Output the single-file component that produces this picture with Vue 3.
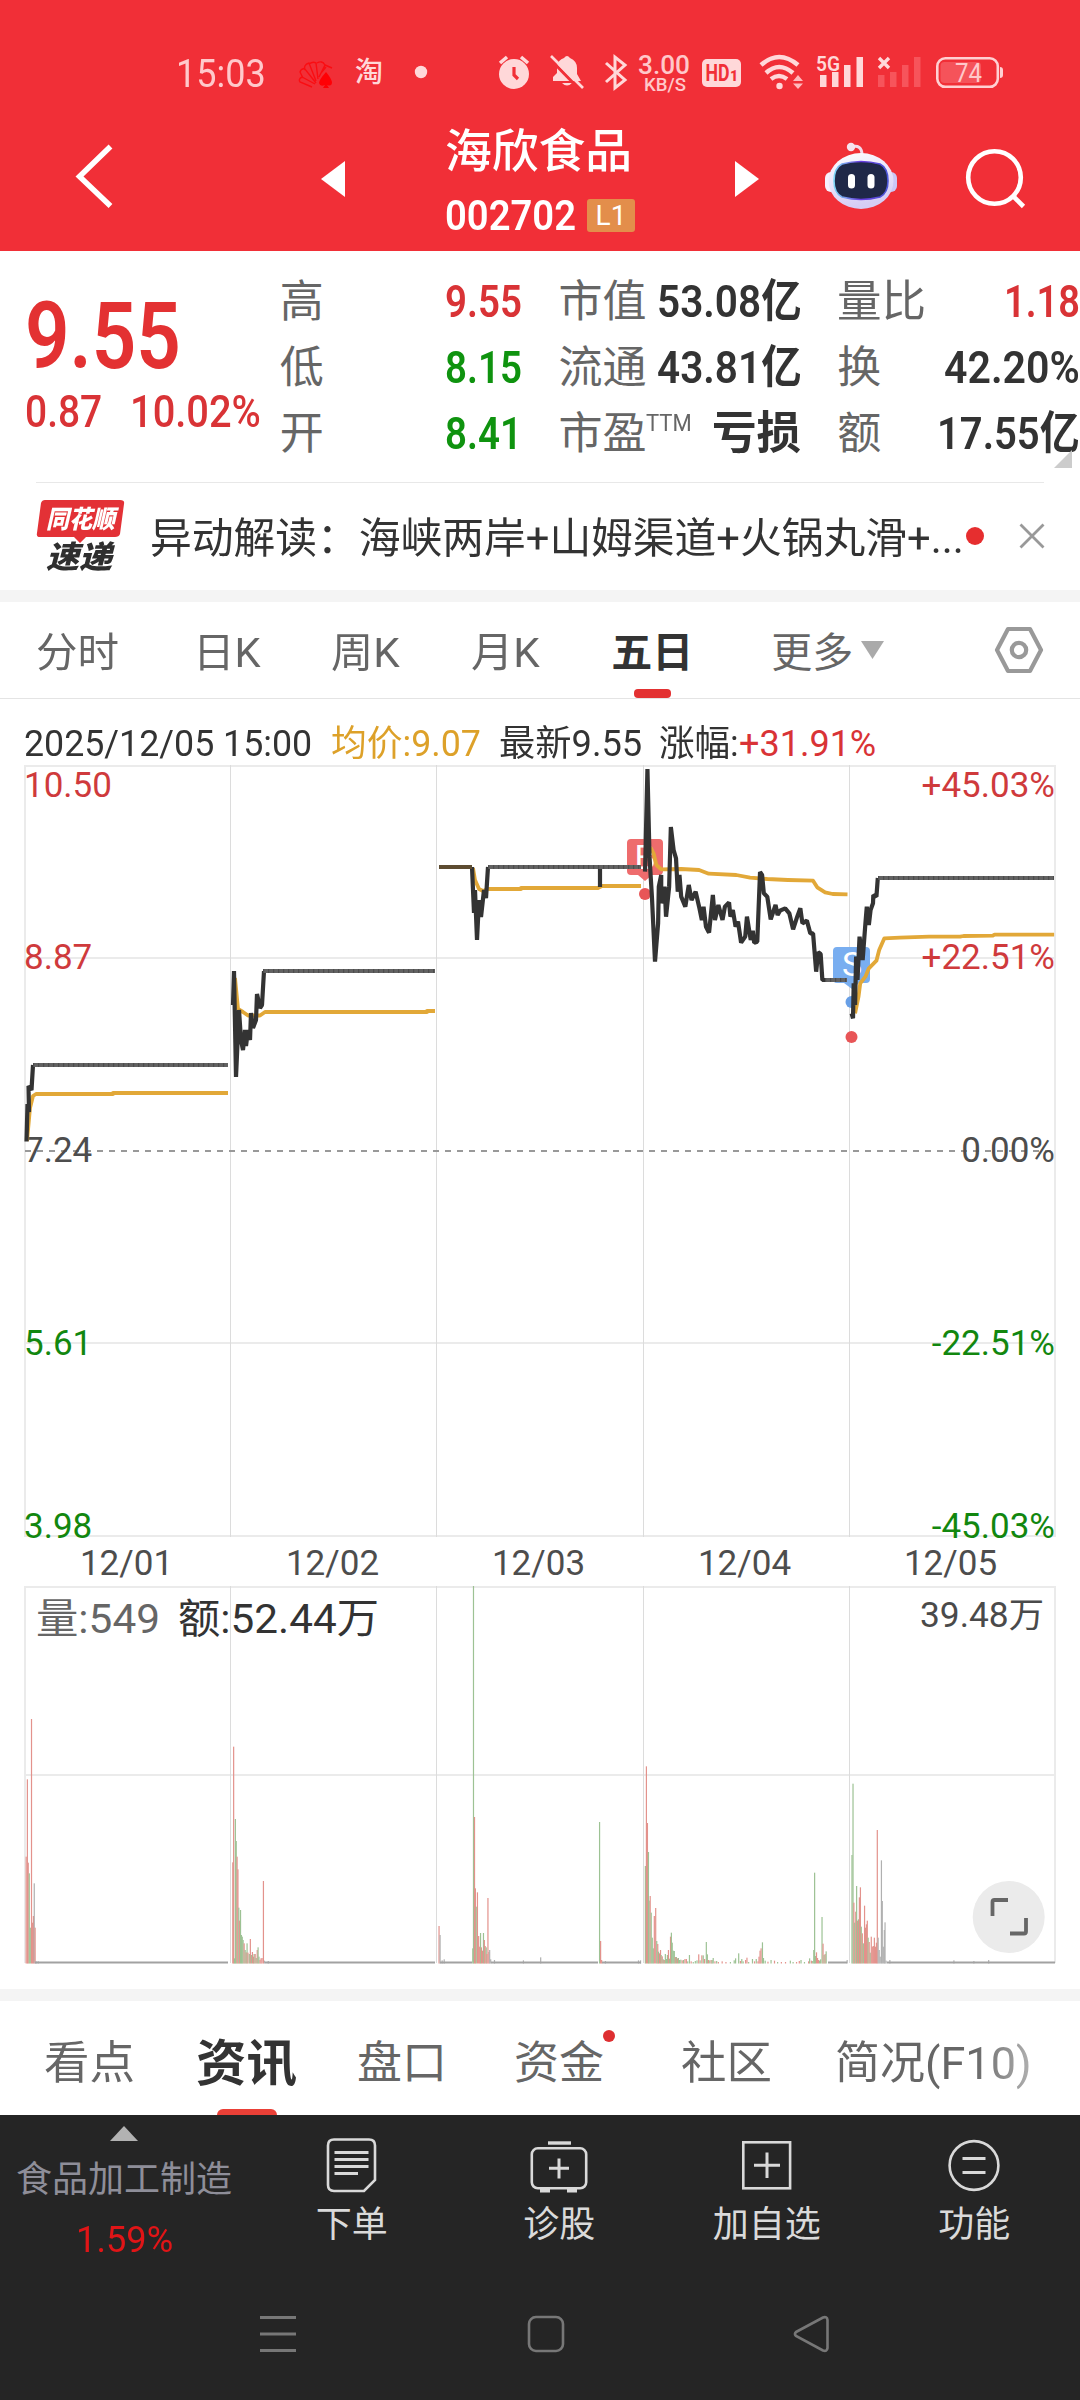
<script setup>
// v-fit sets an exact advance width on a run of text by condensing its glyphs
const vFit = {
  mounted(el, { value }) {
    const natural = el.offsetWidth
    el.style.transform = `scaleX(${value / natural})`
    el.style.marginRight = `${value - natural}px`
  }
}

const quoteColumns = [
  [
    { label: '高', lw: 44, value: '9.55', vw: 77, tone: 'up' },
    { label: '低', lw: 44, value: '8.15', vw: 77, tone: 'down' },
    { label: '开', lw: 44, value: '8.41', vw: 77, tone: 'down' }
  ],
  [
    { label: '市值', lw: 88, value: '53.08亿', vw: 145, tone: 'plain' },
    { label: '流通', lw: 88, value: '43.81亿', vw: 145, tone: 'plain' },
    { label: '市盈', lw: 88, sup: 'TTM', value: '亏损', vw: 89, tone: 'plain' }
  ],
  [
    { label: '量比', lw: 89, value: '1.18', vw: 76, tone: 'up' },
    { label: '换', lw: 44, value: '42.20%', vw: 136, tone: 'plain' },
    { label: '额', lw: 44, value: '17.55亿', vw: 143, tone: 'plain' }
  ]
]

const periods = [
  { name: '分时', left: 36, w: 83 },
  { name: '日K', left: 74, w: 68 },
  { name: '周K', left: 70, w: 69 },
  { name: '月K', left: 72, w: 69 },
  { name: '五日', left: 71, w: 82 },
  { name: '更多', left: 78, w: 82 }
]
periods[4].active = true

const priceLabels = [
  { y: 771, left: '10.50', right: '+45.03%', tone: 'up' },
  { y: 943, left: '8.87', right: '+22.51%', tone: 'up' },
  { y: 1136, left: '7.24', right: '0.00%', tone: 'mid' },
  { y: 1329, left: '5.61', right: '-22.51%', tone: 'down' },
  { y: 1512, left: '3.98', right: '-45.03%', tone: 'down' }
]

const dates = ['12/01', '12/02', '12/03', '12/04', '12/05']
const dayLines = [230.5, 436.5, 643.5, 849.5]

const day4 = '305,365 312,57 318,320 325,440 334,635 343,520 345,410 352,375 352,460 362,410 366,500 375,410 380,231 388,300 395,325 400,425 405,375 410,440 422,470 432,405 440,450 452,425 462,470 470,510 475,470 482,530 491,548 502,435 508,510 518,465 530,510 537,470 549,457 553,500 560,480 568,530 575,515 584,578 596,560 601,500 612,570 618,542 622,578 631,575 639,366 645,375 650,430 660,440 670,508 684,465 690,495 697,482 712,475 724,490 735,538 747,500 756,475 762,520 775,512 785,550 793,550 802,665 808,607 815,612 820,690 830,690'
const day4Avg = '320,292 330,310 338,345 352,358 410,357 462,360 490,371 570,375 610,383 660,387 720,390 793,392 805,412 828,427 850,432 893,433'
const day5 = '905,790 909,805 911,700 915,765 918,620 922,690 928,560 937,630 945,520 949,470 955,525 960,480 967,460 968,435 977,440 981,384'
const day5Avg = '915,790 925,740 930,700 945,680 955,655 977,632 985,600 1000,565 1045,563 1130,560 1220,560 1230,558 1315,557 1320,554 1493,554'

// Volume bars as x, top, tone on a fine grid: r rise, g fall, k flat
const earlyBars = `76 1070 r,79.5 838 r,82 1088 r,85 1120 g,88 1283 g,91.5 657 r,94 1268 r,97 1248 r,99.5 1150 k,102 1283 r,105 1384 k,111 1384 k,
676 1087 r,678.5 740 r,681 1375 g,683.5 957 g,686 1023 g,688.5 1070 r,691 1108 r,693.5 1223 g,696 1262 r,698.5 1230 g,701 1305 g,703.5 1310 g,706 1320 g,709 1330 r,712 1350 g,715 1357 r,717.5 1330 g,720 1358 r,724 1362 g,727 1317 r,730 1365 g,733 1356 r,736 1370 r,738 1362 g,741 1362 r,744 1374 g,747 1350 r,749.5 1342 g,752 1370 g,755 1380 r,758 1375 r,761 1374 r,765 1143 r,768 1382 k,779 1383 k,
1275 1278 r,1278 1305 k,1284 1381 k,1290 1378 k,1373 1345 g,1375 258 g,1378 951 r,1380.5 1165 r,1383 1220 g,1386.5 1177 r,1390 1308 r,1393 1340 r,1395.5 1299 g,1398 1342 r,1401 1352 r,1404 1299 g,1406.5 1320 r,1409 1338 r,1412 1342 g,1414 1362 r,1417 1194 r,1420 1356 r,1422 1350 k,1425 1378 k,1436 1380 k,1520 1381 k`
const lateBars = `2 1372 k,173 966 g,176 1323 r,179 1380 r,190 1383 k,286 1381 k,292 1381 k,
306 1098 g,309 799 r,312 969 r,315 1056 g,317 1202 g,320 1188 r,323 1238 g,326 1313 g,329 1345 g,332 1248 r,336 1224 r,339 1323 g,342 1332 r,344 1355 g,347 1360 r,350 1350 r,352 1365 g,355 1369 r,358 1378 g,361 1380 r,364 1362 g,367 1377 g,370 1365 g,373 1350 r,376 1376 g,379 1310 r,381.5 1298 g,384 1328 g,387 1352 g,390 1353 g,393 1371 r,396 1371 g,399 1375 r,402 1374 g,405 1380 g,409 1379 g,413 1381 r,417 1380 g,421 1377 r,425 1377 r,429 1384 g,434 1365 g,439 1384 r,445 1386 g,451 1383 g,456 1381 g,461 1363 r,465 1381 g,470 1366 r,474 1366 g,478 1377 r,483 1326 g,486 1363 g,489 1380 r,493 1381 g,497 1380 r,500 1380 g,503 1374 g,508 1384 r,513 1383 g,518 1386 r,529 1384 r,540 1386 r,553 1386 g,564 1381 g,568 1375 g,577 1360 g,582 1383 r,586 1377 g,590 1384 g,597 1380 r,601 1373 r,606 1386 g,617 1377 g,623 1384 r,628 1377 g,633 1384 r,636 1370 r,639 1352 r,642 1345 r,646 1327 g,649 1374 g,654 1382 g,662 1385 r,671 1380 g,681 1382 r,690 1386 g,701 1386 r,713 1386 r,727 1382 g,735 1386 g,745 1386 r,753 1383 r,758 1380 g,768 1386 g,780 1384 r,783 1375 g,788 1382 r,792 1383 g,795 1350 g,797.5 1118 g,800 1368 g,803 1357 r,806 1374 r,809 1380 r,812 1382 g,815 1378 g,819 1251 g,822 1331 r,825 1365 g,828 1362 r,831 1354 g,892 1380 k,
906 1065 g,909 851 g,911.5 1208 r,914 1268 g,917 1235 r,919.5 1158 g,922 1262 r,925 1258 g,927.5 1192 r,930.5 1162 r,933 1280 g,936 1300 r,939 1330 g,942.5 1217 r,945 1283 r,948 1273 r,950.5 1262 r,953 1313 g,956 1326 r,959 1358 g,962 1310 r,965 1340 r,968 1338 r,971 1313 r,974 1340 r,977 1328 r,979.5 990 r,982 1313 k,985 1350 k,988 1370 k,991.5 1081 k,994 1203 k,997 1340 k,1000 1290 k,1002 1267 k,1005 1382 k,1016 1380 k,1202 1381 k,1260 1383 k,1303 1380 k`
const toBars = (raw, offset) =>
  raw.split(',').map((row) => {
    const [x, y, tone] = row.trim().split(' ')
    const top = 1500 + y / 3
    return { x: offset + x / 2.904 - 0.6, y: top, h: 1963.5 - top, tone }
  })
const bars = [...toBars(earlyBars, 0), ...toBars(lateBars, 540)]

const sections = [
  { name: '看点', left: 44, w: 91 },
  { name: '资讯', left: 61, w: 101, active: true },
  { name: '盘口', left: 60, w: 90 },
  { name: '资金', left: 67, w: 90, dot: true },
  { name: '社区', left: 77, w: 91 },
  { name: '简况(F10)', left: 63, w: 197, fade: true }
]
</script>

<template>
  <div class="page">
    <header class="top">
      <div class="status">
        <span v-fit="90" class="clock">15:03</span>
        <svg class="status-icons" width="730" height="44" viewBox="290 50 730 44">
          <g fill="none" stroke="#fa0d12" stroke-width="1.400">
            <path d="M312 87L300 82Q298 79 302 77L315 84M303 78L300 72Q301 68 305 69L316 83M305 70Q303 65 309 63L316 81M309 64Q313 61 316 63L318 79M317 63Q322 60 325 65L319 77M325 65L332 68M326 67L321 73" />
          </g>
          <path d="M326 72Q319 80 319 83Q320 87 325 85L323 88H329L327 85Q332 87 332 82Q331 78 326 72Z" fill="#ff0005" />
          <text x="355" y="82" class="tao">淘</text>
          <circle cx="421" cy="72" r="6.2" fill="#ffd8d9" />
          <circle cx="514" cy="74" r="15" fill="#ffd8d9" />
          <path d="M500 63L507 57M528 63L521 57" stroke="#ffd8d9" stroke-width="3.5" />
          <path d="M514 67V75L518 79" fill="none" stroke="#f12f37" stroke-width="3.2" />
          <path d="M564 58Q567 54 570 58Q577 61 577 68V74L581 81H553V77L557 73V66Q558 60 564 58ZM562 83H572Q567 88 562 83Z" fill="#ffd8d9" />
          <path d="M549 58L581 91" stroke="#f12f37" stroke-width="3" />
          <path d="M551 56L583 88" stroke="#ffd8d9" stroke-width="2.6" />
          <path d="M606 63L625 80L615 88V57L625 65L606 82" fill="none" stroke="#ffd8d9" stroke-width="3" />
          <g fill="#ffc8ca" font-weight="500">
            <text x="638" y="74" font-size="26" textLength="52" lengthAdjust="spacingAndGlyphs">3.00</text>
            <text x="644" y="90.500" font-size="19" textLength="42" lengthAdjust="spacingAndGlyphs">KB/S</text>
          </g>
          <rect x="702" y="59" width="39" height="28" rx="5" fill="#ffd8d9" />
          <text x="705.500" y="81" font-size="23" font-weight="700" fill="#f12f37" textLength="24" lengthAdjust="spacingAndGlyphs">HD</text>
          <text x="730" y="81" font-size="14" font-weight="900" fill="#f12f37">1</text>
          <g fill="none" stroke="#ffd8d9" stroke-width="4.500">
            <path d="M761 65Q779 49 798 65M766 73Q779 61 793 73M771 79Q779 73 787 79" />
          </g>
          <circle cx="779.500" cy="86" r="3.200" fill="#ffd8d9" />
          <path d="M793 81L798 75L803 81ZM793 83.500L798 89L803 83.500Z" fill="#ffb9bc" />
          <text x="816" y="70.500" font-size="21" font-weight="600" fill="#ffd8d9" textLength="24" lengthAdjust="spacingAndGlyphs">5G</text>
          <path d="M820 75H826.500V87H820ZM832 72H838.500V87H832ZM844 65H850.500V87H844ZM856.500 57H863V87H856.500Z" fill="#ffd8d9" />
          <path d="M879 58L889 68M889 58L879 68" stroke="#ffd8d9" stroke-width="3.400" />
          <path d="M878 75H884.500V87H878ZM890 72H896.500V87H890ZM902 65H908.500V87H902ZM914 57H920.500V87H914Z" fill="#f7545b" />
          <rect x="937.300" y="58.300" width="60.500" height="28.500" rx="8" fill="none" stroke="#ffd0d2" stroke-width="2.600" />
          <path d="M1000 67Q1003 67 1003 70V75Q1003 78 1000 78Z" fill="#ffd0d2" />
          <rect x="940.500" y="62" width="40.500" height="21" rx="4" fill="#f5535a" />
          <text x="955" y="82" font-size="25" fill="#ffc8ca" textLength="27" lengthAdjust="spacingAndGlyphs">74</text>
        </svg>
      </div>
      <div class="nav">
        <svg class="back" width="40" height="68" viewBox="75 143 40 68"><path d="M110.500 146.500L79.500 176.500L110.500 206" fill="none" stroke="#fff" stroke-width="5.500" /></svg>
        <svg class="prev" width="24" height="36" viewBox="0 0 24 36"><path d="M0 18L24 0V36Z" fill="#fff" /></svg>
        <div class="title">
          <div v-fit="187" class="name">海欣食品</div>
          <div class="code-row">
            <span v-fit="131" class="code">002702</span>
            <span class="level">L1</span>
          </div>
        </div>
        <svg class="next" width="24" height="36" viewBox="0 0 24 36"><path d="M24 18L0 0V36Z" fill="#fff" /></svg>
        <svg class="robot" width="74" height="68" viewBox="824 142 74 68">
          <defs>
            <linearGradient id="shell" x1="0" y1="0" x2="0.300" y2="1"><stop offset="0" stop-color="#fff" /><stop offset=".55" stop-color="#e9e3fa" /><stop offset="1" stop-color="#d5cdf4" /></linearGradient>
            <linearGradient id="rim" x1="0" y1="0" x2="1" y2="0"><stop offset="0" stop-color="#7cd6f5" /><stop offset=".5" stop-color="#6a3be0" /><stop offset="1" stop-color="#4a57d8" /></linearGradient>
          </defs>
          <path d="M851 147Q862 144 862 155" fill="none" stroke="#f3dbea" stroke-width="3" />
          <circle cx="851" cy="147" r="4.200" fill="#f6e3ee" />
          <rect x="825" y="172" width="14" height="20" rx="6" fill="#f6f1fd" />
          <rect x="883" y="172" width="14" height="20" rx="6" fill="#cbc6f5" />
          <ellipse cx="861" cy="181" rx="32.500" ry="28" fill="url(#shell)" />
          <path d="M842 164Q861 159 880 164Q888 168 888 181Q888 193 880 197Q861 202 842 197Q834 193 834 181Q834 168 842 164Z" fill="#1f2848" stroke="url(#rim)" stroke-width="1.600" />
          <rect x="848" y="174" width="7" height="14.500" rx="3.500" fill="#fff" />
          <rect x="867.500" y="174" width="7" height="14.500" rx="3.500" fill="#fff" />
        </svg>
        <svg class="search" width="62" height="62" viewBox="964 147 62 62"><circle cx="994.500" cy="177.500" r="26.300" fill="none" stroke="#fff" stroke-width="4.600" /><path d="M1013 196L1023.500 206.500" stroke="#fff" stroke-width="4.600" /></svg>
      </div>
    </header>

    <section class="quote">
      <div class="price-block up">
        <div v-fit="156" class="price">9.55</div>
        <div class="change"><span v-fit="77">0.87</span><span v-fit="131">10.02%</span></div>
      </div>
      <div v-for="(col, i) in quoteColumns" :key="i" class="stat-col">
        <div v-for="row in col" :key="row.label" class="stat">
          <span v-fit="row.lw" class="stat-label">{{ row.label }}</span>
          <span v-if="row.sup" v-fit="46" class="sup">{{ row.sup }}</span>
          <span v-fit="row.vw" class="stat-value" :class="row.tone">{{ row.value }}</span>
        </div>
      </div>
      <i class="corner"></i>
    </section>

    <section class="news">
      <div class="badge">
        <svg class="tag" width="90" height="44" viewBox="0 0 90 44"><path d="M9 1H84Q89 1 88 5L84 35Q83 38 79 38H50L44 44L38 38H4Q0 38 1 34L5 4Q6 1 9 1Z" fill="#e33136" /></svg>
        <span v-fit="69" class="tag-text">同花顺</span>
        <span v-fit="66" class="express">速递</span>
      </div>
      <span v-fit="814" class="headline">异动解读：海峡两岸+山姆渠道+火锅丸滑+...</span>
      <i class="unread"></i>
      <svg class="close" width="28" height="28" viewBox="0 0 28 28"><path d="M2.500 2.500L25.500 25.500M25.500 2.500L2.500 25.500" stroke="#999" stroke-width="2.800" /></svg>
    </section>

    <nav class="periods">
      <div v-for="p in periods" :key="p.name" class="period" :class="{ active: p.active }" :style="{ marginLeft: p.left + 'px' }">
        <span v-fit="p.w">{{ p.name }}</span>
      </div>
      <svg class="caret" width="23" height="18" viewBox="0 0 23 18"><path d="M0 0H23L11.500 18Z" fill="#aaa" /></svg>
      <svg class="gear" width="50" height="48" viewBox="0 0 50 48"><path d="M14 3H36L47 24L36 45H14L3 24Z" fill="none" stroke="#999" stroke-width="4.200" stroke-linejoin="round" /><circle cx="25" cy="24" r="7.200" fill="none" stroke="#999" stroke-width="4.200" /></svg>
    </nav>

    <div class="summary">
      <span v-fit="288">2025/12/05 15:00</span>
      <span v-fit="150" class="avg">均价:9.07</span>
      <span v-fit="143" class="latest">最新9.55</span>
      <span v-fit="80" class="range">涨幅:</span>
      <span v-fit="137" class="up">+31.91%</span>
    </div>

    <svg class="chart" width="1080" height="1224" viewBox="0 765 1080 1224">
      <g fill="none" stroke="#ebebeb" stroke-width="2">
        <path d="M24 766H1056M24 958H1056M24 1343H1056M24 1536H1056M25 765V1537M1055 765V1537" />
        <path d="M24 1587H1056M24 1775H1056M25 1586V1963M1055 1586V1963" />
      </g>
      <path v-for="x in dayLines" :key="x" :d="`M${x} 765V1537M${x} 1586V1963`" stroke="#dcdcdc" stroke-width="1" />
      <path d="M25 1151H1055" stroke="#999" stroke-width="2" stroke-dasharray="6 6" />

      <g v-for="l in priceLabels" :key="l.y" :class="l.tone" class="axis">
        <text x="24" :y="l.y + 26">{{ l.left }}</text>
        <text x="1055" :y="l.y + 26" text-anchor="end">{{ l.right }}</text>
      </g>
      <text v-for="(d, i) in dates" :key="d" class="axis mid" :x="126.500 + i * 206" y="1575" text-anchor="middle">{{ d }}</text>

      <path d="M631 839H659Q663 839 663 843V871Q663 875 659 875H652L645 881L638 875H631Q627 875 627 871V843Q627 839 631 839Z" fill="#ee6c6d" />
      <text x="645" y="869" class="mark" text-anchor="middle">B</text>
      <circle cx="645" cy="894" r="6" fill="#e85557" />
      <path d="M837 947H866Q870 947 870 951V979Q870 983 866 983H859L852 989L844 983H837Q833 983 833 979V951Q833 947 837 947Z" fill="#79aef0" />
      <text x="852" y="976" class="mark" text-anchor="middle">S</text>
      <circle cx="851.500" cy="1002" r="6" fill="#689fe6" />
      <circle cx="851.500" cy="1037" r="6" fill="#e85557" />

      <g fill="none" stroke="#e2a838" stroke-width="3.800" stroke-linejoin="round">
        <path d="M27 1141L30 1108L33 1096L36 1094H113V1093H228" />
        <path d="M235 978L238 1009L243 1012L248 1015.500L260 1015.500L265 1012H427V1011H435" />
        <path d="M473 868L475 880L479 889L483 891L488 889H521V888H598L602 886H641" />
        <g transform="translate(540 750) scale(.34435 .33333)">
          <polyline :points="day4Avg" class="steady" />
          <polyline :points="day5Avg" class="steady" />
        </g>
      </g>
      <g fill="none" stroke="#333" stroke-width="4.200" stroke-linejoin="bevel">
        <path d="M26.500 1141.500L27.500 1104L29 1112L28.500 1086L31.500 1090L33 1065" />
        <path d="M233 1005L234 971L236 1077L239 1010L241 1040L243 1050L245 1030L246 1046L248 1030L250 1040L251 1013L253 1028L256 1020L257 994L260 1008L262 1005L264 971" />
        <path d="M472 867L474 913L475 890L477 940L479 900L481 917L484 890L486 898L488 867M600 867V887" />
        <g transform="translate(540 750) scale(.34435 .33333)">
          <polyline :points="day4" class="steady" />
          <polyline :points="day5" class="steady" />
        </g>
      </g>
      <path d="M33 1065H228M263 971H435M488 867H641M825 980H847M878 878H1054" stroke="#626262" stroke-width="4" />
      <path d="M33 1065H228M263 971H435M488 867H641M825 980H847M878 878H1054" stroke="#4d4d4d" stroke-width="4" stroke-dasharray="1.200 3.800" />
      <path d="M439 867H472" stroke="#5d4c31" stroke-width="4" />

      <rect v-for="(b, i) in bars" :key="i" :x="b.x" :y="b.y" :height="b.h" width="1.200" :class="'vol-' + b.tone" />
      <path d="M35 1962.500H228M265 1962.500H435M440 1962.500H472M491 1962.500H598M602 1962.500H641M828 1962.500H847M887 1962.500H1055" stroke="#a2a2a2" stroke-width="2" />

      <text x="36" y="1633" font-size="41" fill="#666" textLength="124" lengthAdjust="spacingAndGlyphs">量:549</text>
      <text x="178" y="1633" font-size="41" fill="#333" textLength="201" lengthAdjust="spacingAndGlyphs">额:52.44万</text>
      <text x="920" y="1627" font-size="34.500" fill="#4a4a4a" textLength="124" lengthAdjust="spacingAndGlyphs">39.48万</text>
      <circle cx="1008.700" cy="1917" r="36" fill="#ebebeb" />
      <path d="M992.500 1916V1902Q992.500 1900 994.500 1900H1008M1010 1933.500H1024Q1026 1933.500 1026 1931.500V1918" fill="none" stroke="#666" stroke-width="3.800" />
    </svg>

    <nav class="sections">
      <div v-for="s in sections" :key="s.name" class="section" :class="{ active: s.active, fade: s.fade }" :style="{ marginLeft: s.left + 'px' }">
        <span v-fit="s.w">{{ s.name }}</span>
        <i v-if="s.dot" class="dot"></i>
      </div>
    </nav>

    <footer class="bottom">
      <div class="actions">
        <div class="industry">
          <svg width="28" height="15" viewBox="0 0 28 15"><path d="M14 0L28 15H0Z" fill="#b2b2b2" /></svg>
          <div class="industry-name">食品加工制造</div>
          <div v-fit="97" class="industry-rate">1.59%</div>
        </div>
        <div class="action">
          <svg width="60" height="56" viewBox="0 0 60 56" fill="none" stroke="#d9d9d9" stroke-width="2.600"><path d="M12 2.500H47Q53 2.500 53 8.500V43L42 54H12Q6 54 6 48V8.500Q6 2.500 12 2.500Z" /><path d="M12.500 15.500H46.500M12.500 22.500H46.500M12.500 29.500H46.500M12.500 36.500H36" stroke-width="3" /></svg>
          <span>下单</span>
        </div>
        <div class="action">
          <svg width="60" height="56" viewBox="0 0 60 56" fill="none" stroke="#d9d9d9" stroke-width="2.600"><path d="M19 6H42" stroke-width="3.400" /><rect x="2.800" y="11.300" width="54.400" height="40" rx="6" /><path d="M20 31.300H40M30 21.500V41.500" stroke-width="3" /><path d="M11 53.500H21M38 53.500H48" stroke-width="4" /></svg>
          <span>诊股</span>
        </div>
        <div class="action">
          <svg width="60" height="56" viewBox="0 0 60 56" fill="none" stroke="#d9d9d9" stroke-width="2.600"><rect x="6.300" y="5.300" width="46.800" height="46" /><path d="M17 28.300H43M30 15.500V41" stroke-width="3" /></svg>
          <span>加自选</span>
        </div>
        <div class="action">
          <svg width="60" height="56" viewBox="0 0 60 56" fill="none" stroke="#d9d9d9" stroke-width="2.600"><circle cx="30" cy="28.500" r="24.400" /><path d="M18.500 21.500H41.500M18.500 35.500H41.500" stroke-width="3" /></svg>
          <span>功能</span>
        </div>
      </div>
      <div class="system">
        <svg width="36" height="38" viewBox="0 0 36 38"><path d="M0 2.500H36M0 19H36M0 35.500H36" stroke="#777" stroke-width="3" /></svg>
        <svg width="38" height="38" viewBox="0 0 38 38"><rect x="2" y="2" width="34" height="34" rx="7" fill="none" stroke="#777" stroke-width="2.600" /></svg>
        <svg width="38" height="38" viewBox="0 0 38 38"><path d="M3 17L30 2.500Q34 1 34.500 5V33Q34 37 30 35.500L3 21Q1 19 3 17Z" fill="none" stroke="#777" stroke-width="2.600" /></svg>
      </div>
    </footer>
  </div>
</template>

<style>
body {
  margin: 0;
  background: #fff;
}
</style>

<style scoped>
.page {
  width: 1080px;
  height: 2400px;
  overflow: hidden;
  display: flex;
  flex-direction: column;
  background: #fff;
  color: #333;
  font-family: Roboto, 'Noto Sans CJK SC', sans-serif;
}
.page > * { flex: none; }
.page span { display: inline-block; flex: none; white-space: nowrap; transform-origin: 0 50%; }
svg { display: block; flex: none; }
.up { color: #d93336; fill: #cf3a3c; }
.down { color: #0f930f; fill: #12870f; }
.mid { fill: #4d4d4d; }

.top { height: 251px; background: #f12f37; }
.status { height: 94px; display: flex; }
.clock { margin-left: 176px; margin-top: 50px; font-size: 38px; line-height: 48px; color: #ffc9cb; }
.status-icons { margin-left: 24px; margin-top: 50px; }
.tao { font-size: 28px; font-weight: 500; fill: #ffd8d9; }
.nav { height: 157px; display: flex; align-items: flex-start; }
.back { margin-left: 75px; margin-top: 49px; }
.prev { margin-left: 206px; margin-top: 67px; }
.title { width: 192px; margin-left: 100px; }
.name { width: max-content; transform-origin: 0 50%; margin-top: 29px; font-size: 46px; line-height: 56px; font-weight: 500; color: #fff; }
.code-row { display: flex; align-items: center; margin-top: 16px; height: 41px; }
.code { font-size: 42px; line-height: 42px; font-weight: 600; color: #fff; }
.page .level { margin-left: 11px; width: 48px; height: 33px; border-radius: 3px; background: #e38e4b; color: #fff; font-size: 28px; line-height: 33px; text-align: center; }
.next { margin-left: 98px; margin-top: 67px; }
.robot { margin-left: 65px; margin-top: 48px; }
.search { margin-left: 66px; margin-top: 53px; }

.quote { position: relative; height: 231px; display: flex; }
.price-block { width: 255px; margin-left: 25px; }
.price { width: max-content; transform-origin: 0 50%; margin-top: 38px; font-size: 92px; line-height: 96px; font-weight: 600; color: #e33132; }
.change { display: flex; justify-content: space-between; width: 236px; margin-top: 0; font-size: 45px; line-height: 53px; font-weight: 500; }
.stat-col { width: 242px; padding-top: 17.500px; }
.stat-col + .stat-col { margin-left: 37px; width: 243px; }
.stat-col:nth-of-type(4) { margin-left: 36px; width: 243px; }
.stat { display: flex; height: 66px; line-height: 66px; }
.stat-label { font-size: 44px; color: #666; }
.page .sup { font-size: 23px; line-height: 46px; color: #666; }
.stat-value { font-size: 45px; font-weight: 600; }
.stat::before { content: ''; order: 1; flex: 1; }
.stat-value { order: 2; }
.corner { position: absolute; right: 8px; bottom: 14px; border-left: 18px solid transparent; border-bottom: 18px solid #ccc; }

.news { height: 108px; display: flex; margin-left: 36px; width: 1044px; box-sizing: border-box; background: linear-gradient(#e8e8e8, #e8e8e8) 0 0 / 1008px 1px no-repeat; padding-top: 2px; }
.badge { position: relative; width: 90px; height: 90px; margin-top: 15px; }
.badge span { position: absolute; left: 10px; font-style: italic; font-weight: 900; }
.page .tag-text { top: 6px; font-size: 25px; line-height: 30px; color: #fff; }
.page .express { top: 41px; font-size: 31px; line-height: 36px; color: #2f2f2f; }
.headline { margin-left: 24px; margin-top: 24px; font-size: 42px; line-height: 62px; }
.unread { width: 18px; height: 18px; border-radius: 50%; background: #e62e2f; margin-left: 2px; margin-top: 43px; }
.close { margin-left: 34px; margin-top: 38px; }

.periods { border-top: 12px solid #f4f4f4; border-bottom: 1.500px solid #e4e4e4; display: flex; height: 96px; }
.period { position: relative; height: 96px; line-height: 102px; font-size: 41px; color: #666; }
.period.active { color: #333; font-weight: 700; }
.period.active::after { content: ''; position: absolute; left: 23px; bottom: 0; width: 37px; height: 9px; border-radius: 4px; background: #e33132; }
.caret { margin-left: 8px; margin-top: 39px; }
.gear { margin-left: 110px; margin-top: 24px; }

.summary { height: 66px; display: flex; padding-left: 24px; font-size: 36px; line-height: 91px; overflow: hidden; }
.summary .avg { margin-left: 19px; color: #dda129; }
.summary .latest { margin-left: 18px; }
.summary .range { margin-left: 17px; }

.chart { font-family: Roboto, 'Noto Sans CJK SC', sans-serif; }
.axis { font-size: 35px; }
.mark { font-size: 34px; fill: #fff; }
.steady { vector-effect: non-scaling-stroke; }
.vol-r { fill: #e3928c; }
.vol-g { fill: #9dc294; }
.vol-k { fill: #b0b0b0; }

.sections { height: 114px; border-top: 12px solid #f4f4f4; display: flex; }
.section { position: relative; height: 114px; line-height: 126px; font-size: 45px; color: #666; }
.section.active { font-size: 50px; font-weight: 700; color: #333; }
.section.active::after { content: ''; position: absolute; left: 21px; bottom: 0; width: 60px; height: 6px; border-radius: 6px 6px 0 0; background: #ea4037; }
.fade { -webkit-mask-image: linear-gradient(90deg, #000 70%, rgba(0, 0, 0, .5) 100%); mask-image: linear-gradient(90deg, #000 70%, rgba(0, 0, 0, .5) 100%); }
.dot { position: absolute; left: 89px; top: 29px; width: 12px; height: 12px; border-radius: 50%; background: #de2f31; }

.bottom { height: 285px; background: #252525; }
.actions { height: 160px; display: flex; }
.industry { width: 248px; display: flex; flex-direction: column; align-items: center; padding-top: 11px; box-sizing: border-box; }
.industry-name { margin-top: 13px; font-size: 36px; line-height: 53px; color: #8e8e99; }
.industry-rate { font-size: 37px; line-height: 52px; margin-top: 7px; color: #e01517; }
.action { width: 207.500px; display: flex; flex-direction: column; align-items: center; padding-top: 22px; box-sizing: border-box; color: #dadada; }
.action span { font-size: 36px; line-height: 50px; margin-top: 7px; }
.system { display: flex; padding: 40px 0 0 260px; }
.system svg:nth-child(2) { margin-left: 231px; }
.system svg:nth-child(3) { margin-left: 228px; }
</style>
